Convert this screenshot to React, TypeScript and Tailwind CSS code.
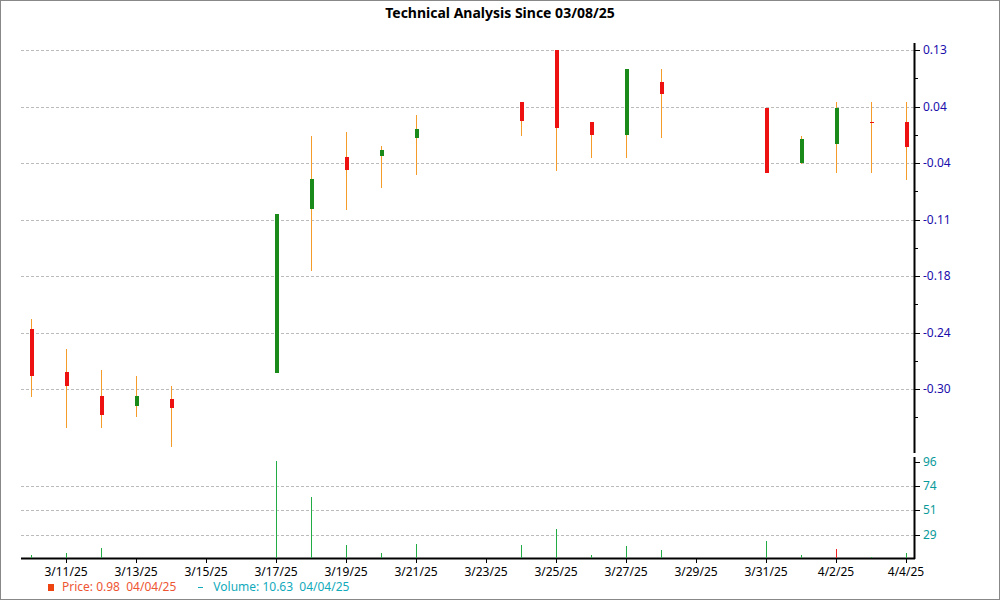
const X0 = 65
const DAY = 35
const xOf = (d: number) => X0 + (d - 11) * DAY

// [day, wickTop, wickBottom, bodyTop, bodyBottom, up]
const CANDLES: [number, number, number, number, number, boolean][] = [
  [10, 318, 396, 328, 375, false],
  [11, 348, 427, 371, 385, false],
  [12, 369, 427, 395, 414, false],
  [13, 375, 416, 395, 405, true],
  [14, 385, 446, 398, 407, false],
  [17, 213, 372, 213, 372, true],
  [18, 135, 270, 178, 208, true],
  [19, 131, 209, 156, 169, false],
  [20, 145, 187, 149, 155, true],
  [21, 114, 174, 128, 137, true],
  [24, 101, 135, 101, 120, false],
  [25, 49, 170, 49, 127, false],
  [26, 121, 157, 121, 134, false],
  [27, 68, 157, 68, 134, true],
  [28, 68, 137, 81, 93, false],
  [31, 107, 172, 107, 172, false],
  [32, 135, 163, 138, 162, true],
  [33, 101, 172, 107, 143, true],
  [34, 101, 172, 121, 122, false],
  [35, 101, 179, 121, 146, false],
]

const VOLUME: [number, number, boolean][] = [
  [10, 554, true], [11, 552, true], [12, 547, true], [17, 460, true], [18, 496, true],
  [19, 544, true], [20, 552, true], [21, 543, true], [24, 544, true], [25, 528, true],
  [26, 554, true], [27, 545, true], [28, 549, true], [31, 540, true], [32, 554, true],
  [33, 548, false], [34, 556, true], [35, 552, true],
]

const PRICE_TICKS: [string, number][] = [
  ["0.13", 49], ["0.04", 106], ["-0.04", 162], ["-0.11", 219],
  ["-0.18", 275], ["-0.24", 332], ["-0.30", 388],
]
const VOL_TICKS: [string, number][] = [["96", 461], ["74", 485], ["51", 509], ["29", 534]]
const DATES = ["3/11/25", "3/13/25", "3/15/25", "3/17/25", "3/19/25", "3/21/25", "3/23/25", "3/25/25", "3/27/25", "3/29/25", "3/31/25", "4/2/25", "4/4/25"]

export default function App() {
  return (
    <div className="relative h-[600px] w-[1000px] border border-[#888] bg-white font-['Liberation_Sans',Arial,sans-serif]">
      <h1 className="pt-[1px] text-center text-[14px] font-bold text-black">
        Technical Analysis Since 03/08/25
      </h1>

      <svg width="1000" height="600" className="absolute left-0 top-0 font-['Liberation_Sans',Arial,sans-serif]">
        {/* grid */}
        {PRICE_TICKS.map(([, y]) => (
          <line key={y} x1={20} x2={913} y1={y + 0.5} y2={y + 0.5} stroke="#bbb" strokeDasharray="3 2" />
        ))}
        {VOL_TICKS.slice(1).map(([, y]) => (
          <line key={y} x1={20} x2={913} y1={y + 0.5} y2={y + 0.5} stroke="#bbb" strokeDasharray="3 2" />
        ))}

        {/* price axis */}
        <line x1={913.5} x2={913.5} y1={42} y2={452} stroke="#000" strokeWidth={2} />
        {PRICE_TICKS.map(([t, y]) => (
          <g key={t}>
            <line x1={913} x2={919} y1={y + 0.5} y2={y + 0.5} stroke="#000" />
            <line x1={913} x2={917} y1={y + 28.5} y2={y + 28.5} stroke="#000" />
            <text x={922} y={y + 4} fontSize={12} fill="#1a0dab">{t}</text>
          </g>
        ))}

        {/* volume axis */}
        <line x1={913.5} x2={913.5} y1={456} y2={558} stroke="#000" strokeWidth={2} />
        <line x1={20} x2={914} y1={557.5} y2={557.5} stroke="#000" strokeWidth={2} />
        {VOL_TICKS.map(([t, y]) => (
          <g key={t}>
            <line x1={913} x2={919} y1={y + 0.5} y2={y + 0.5} stroke="#000" />
            <text x={922} y={y + 4} fontSize={12} fill="#0a9a9a">{t}</text>
          </g>
        ))}

        {/* candles */}
        {CANDLES.map(([d, wt, wb, bt, bb, up]) => {
          const x = xOf(d)
          return (
            <g key={d}>
              <line x1={x + 0.5} x2={x + 0.5} y1={wt} y2={wb} stroke="#f39c2a" />
              <rect x={x - 1} y={bt} width={4} height={Math.max(bb - bt, 1)} fill={up ? "#1a8a1a" : "#ee1111"} />
            </g>
          )
        })}

        {/* volume */}
        {VOLUME.map(([d, top, up]) => {
          const x = xOf(d)
          return <line key={d} x1={x + 0.5} x2={x + 0.5} y1={top} y2={557} stroke={up ? "#22aa44" : "#ee2222"} />
        })}

        {/* dates */}
        {DATES.map((t, i) => {
          const x = X0 + i * 2 * DAY
          return (
            <g key={t}>
              <line x1={x + 0.5} x2={x + 0.5} y1={557} y2={562} stroke="#000" />
              <text x={x} y={575} fontSize={12} textAnchor="middle" fill="#000">{t}</text>
            </g>
          )
        })}
      </svg>

      <div className="absolute left-[47px] top-[580px] flex items-center gap-[22px] text-[12px] leading-none">
        <div className="flex items-center gap-[8px] text-[#ee5533]">
          <span className="h-[7px] w-[6px] bg-[#ee4411]" />
          <span>Price: 0.98&nbsp;&nbsp;04/04/25</span>
        </div>
        <div className="flex items-center gap-[10px] text-[#11aabb]">
          <span className="h-[1px] w-[5px] bg-[#11aabb]" />
          <span>Volume: 10.63&nbsp;&nbsp;04/04/25</span>
        </div>
      </div>
    </div>
  )
}
